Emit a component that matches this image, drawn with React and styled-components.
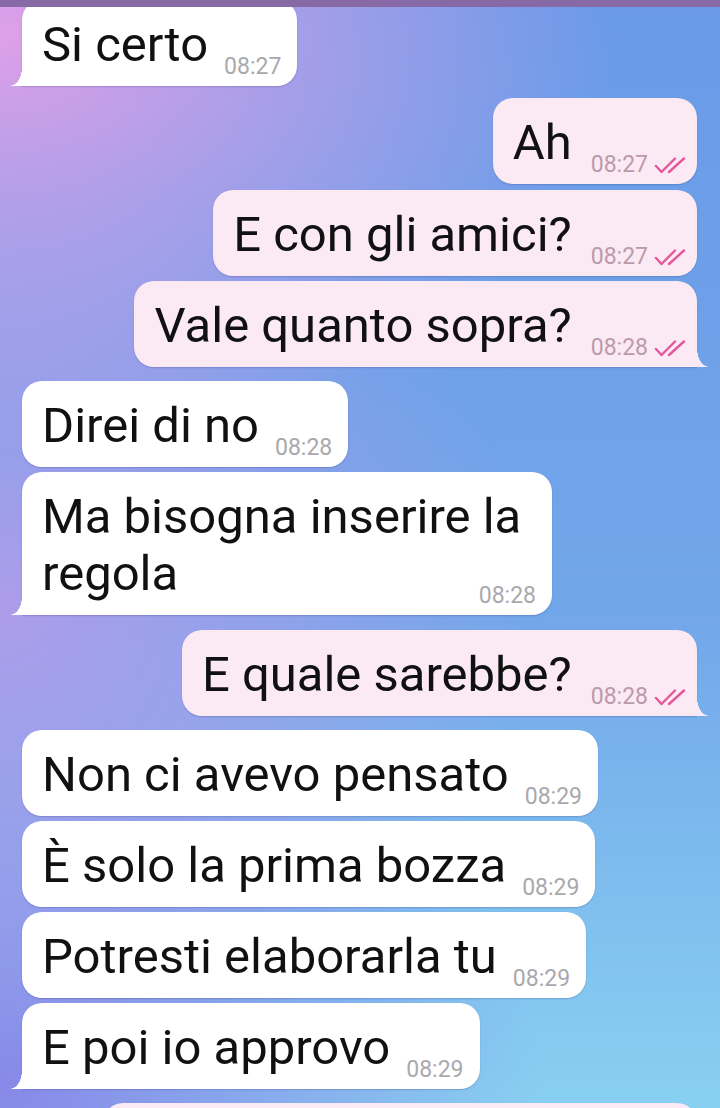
import React from "react";
import styled, { createGlobalStyle, css } from "styled-components";

const GlobalStyle = createGlobalStyle`
  html, body {
    margin: 0;
    padding: 0;
  }
  body {
    width: 720px;
    height: 1108px;
    overflow: hidden;
    font-family: Roboto, "Noto Sans", sans-serif;
  }
`;

const Screen = styled.div`
  position: relative;
  width: 720px;
  height: 1108px;
  overflow: hidden;
  background:
    radial-gradient(ellipse 85% 38% at 0% 3%, rgba(222, 160, 232, 1) 0%, rgba(222, 160, 232, 0) 100%),
    radial-gradient(ellipse 75% 40% at 0% 55%, rgba(176, 156, 234, 0.95) 0%, rgba(176, 156, 234, 0) 100%),
    radial-gradient(ellipse 75% 40% at 0% 98%, rgba(136, 136, 232, 1) 0%, rgba(136, 136, 232, 0) 100%),
    linear-gradient(180deg, #6a9ae8 0%, #72a6ea 55%, #88d0f1 100%);
`;

const TopBar = styled.div`
  position: absolute;
  top: 0;
  left: 0;
  right: 0;
  height: 7px;
  background: #876aa5;
  z-index: 2;
`;

const Chat = styled.div`
  display: flex;
  flex-direction: column;
  padding: 0 23px 0 22px;
`;

const Row = styled.div`
  display: flex;
  justify-content: ${(p) => (p.$out ? "flex-end" : "flex-start")};
  margin-top: ${(p) => p.$gap}px;
`;

const Bubble = styled.div`
  position: relative;
  box-sizing: border-box;
  max-width: 600px;
  min-width: ${(p) => (p.$width ? `${p.$width}px` : "0")};
  padding: 16px ${(p) => (p.$out ? 11 : 16)}px 7px 20px;
  border-radius: 20px;
  background: ${(p) => (p.$out ? "#fbeaf3" : "#ffffff")};
  box-shadow: 0 1px 1.5px rgba(40, 40, 110, 0.22);
  color: #111;
  font-size: 49px;
  line-height: 57px;

  ${(p) =>
    p.$tail &&
    css`
      ${p.$out ? "border-bottom-right-radius: 0;" : "border-bottom-left-radius: 0;"}
      &::after {
        content: "";
        position: absolute;
        bottom: 0;
        ${p.$out ? "right: -12px;" : "left: -12px;"}
        width: 12px;
        height: 18px;
        background: ${p.$out ? "#fbeaf3" : "#ffffff"};
        -webkit-mask: radial-gradient(12px 18px at ${p.$out ? "100%" : "0"} 0, transparent 97%, #000 100%);
        mask: radial-gradient(12px 18px at ${p.$out ? "100%" : "0"} 0, transparent 97%, #000 100%);
      }
    `}
`;

const Meta = styled.span`
  float: right;
  display: flex;
  align-items: center;
  margin: 39px 0 0 ${(p) => (p.$out ? 19 : 16)}px;
  height: 24px;
  font-size: 23px;
  line-height: 24px;
  color: ${(p) => (p.$out ? "#bc9aab" : "#a9a9ad")};
`;

const Ticks = styled.svg`
  width: 32px;
  height: 17px;
  margin-left: 6px;
  margin-top: 1px;
`;

const DoubleCheck = () => (
  <Ticks viewBox="0 0 32 17" fill="none">
    <path
      d="M2 9 L7.5 15 L21 1.5"
      stroke="#e2589d"
      strokeWidth="2.4"
      strokeLinecap="round"
      strokeLinejoin="round"
    />
    <path
      d="M15 15 L30 1.5"
      stroke="#e2589d"
      strokeWidth="2.4"
      strokeLinecap="round"
    />
  </Ticks>
);

const messages = [
  { text: "Si certo", time: "08:27", tail: true, gap: 0 },
  { out: true, text: "Ah", time: "08:27", gap: 12 },
  { out: true, text: "E con gli amici?", time: "08:27", gap: 6 },
  { out: true, text: "Vale quanto sopra?", time: "08:28", tail: true, gap: 5 },
  { text: "Direi di no", time: "08:28", gap: 14 },
  { text: ["Ma bisogna inserire la", "regola"], time: "08:28", tail: true, gap: 5, width: 530 },
  { out: true, text: "E quale sarebbe?", time: "08:28", tail: true, gap: 15 },
  { text: "Non ci avevo pensato", time: "08:29", gap: 14 },
  { text: "È solo la prima bozza", time: "08:29", gap: 5 },
  { text: "Potresti elaborarla tu", time: "08:29", gap: 5 },
  { text: "E poi io approvo", time: "08:29", tail: true, gap: 5 },
  { out: true, text: "\u00a0", time: "", gap: 14, width: 594 },
];

const Message = ({ msg }) => {
  const lines = Array.isArray(msg.text) ? msg.text : [msg.text];
  return (
    <Row $out={msg.out} $gap={msg.gap}>
      <Bubble $out={msg.out} $tail={msg.tail} $width={msg.width}>
        {lines.map((line, i) => (
          <React.Fragment key={i}>
            {i > 0 && <br />}
            {line}
          </React.Fragment>
        ))}
        {msg.time && (
          <Meta $out={msg.out}>
            {msg.time}
            {msg.out && <DoubleCheck />}
          </Meta>
        )}
      </Bubble>
    </Row>
  );
};

export default function App() {
  return (
    <>
      <GlobalStyle />
      <Screen>
        <TopBar />
        <Chat>
          {messages.map((msg, i) => (
            <Message key={i} msg={msg} />
          ))}
        </Chat>
      </Screen>
    </>
  );
}
